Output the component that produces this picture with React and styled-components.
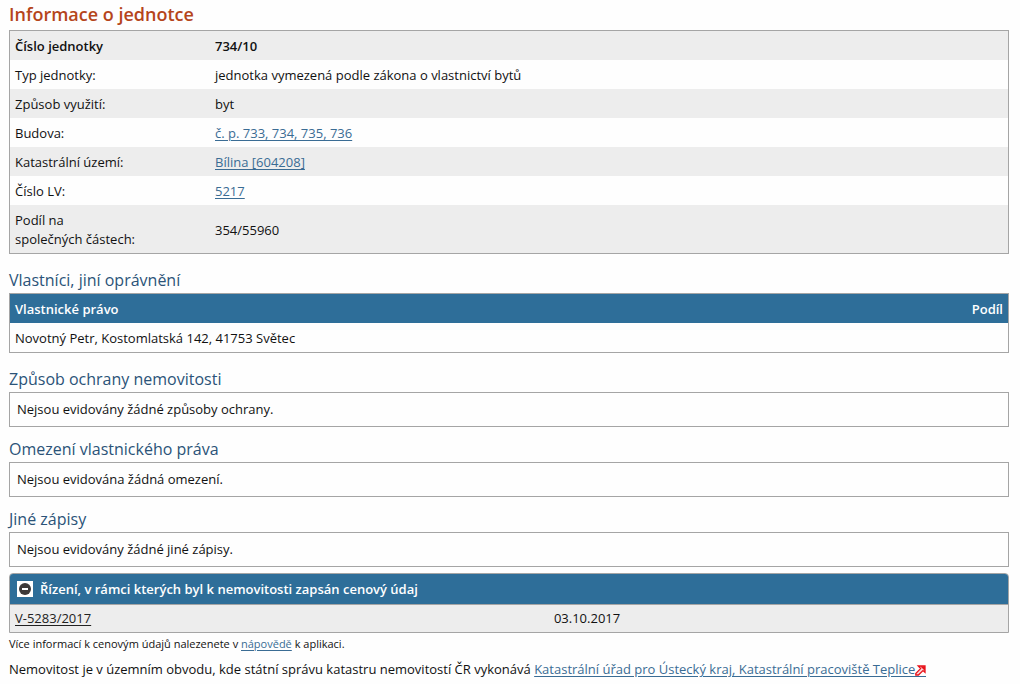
import React, { useState } from 'react';
import styled, { createGlobalStyle } from 'styled-components';

const GlobalStyle = createGlobalStyle`
  body {
    margin: 0;
    background-color: #fefefe;
    color: #111;
    font-family: "Open Sans", "Noto Sans", sans-serif;
    font-size: 13px;
    line-height: 19px;
  }
`;

const Page = styled.main`
  padding: 2px 11px 5px 9px;
`;

const Title = styled.h1`
  margin: 0;
  padding-bottom: 4px;
  color: #b5451b;
  font-size: 18px;
  font-weight: 600;
  line-height: 24px;
`;

const Heading = styled.h2`
  margin: ${props => (props.$afterTable ? '13px' : '9px')} 0 0;
  color: #2b5378;
  font-size: 16px;
  font-weight: 500;
  line-height: 26px;
`;

const Table = styled.table`
  box-sizing: border-box;
  width: 100%;
  border: 1px solid #a5a5a5;
  border-spacing: 0;
`;

const Row = styled.tr`
  background-color: ${props => (props.$shaded ? '#ededed' : '#fefefe')};
  font-weight: ${props => (props.$strong ? 600 : 400)};
`;

const Label = styled.th`
  box-sizing: border-box;
  width: 200px;
  padding: 6px 5px 4px;
  font-weight: inherit;
  text-align: left;
`;

const Cell = styled.td`
  padding: 6px 5px 4px;
`;

const HeadCell = styled.th`
  padding: 6px 5px 4px;
  background-color: #2e6e99;
  color: #fff;
  font-weight: 600;
  text-align: ${props => (props.$right ? 'right' : 'left')};
`;

const Box = styled.div`
  padding: 7px;
  border: 1px solid #a5a5a5;
`;

const Link = styled.a`
  color: ${props => (props.$dark ? '#222' : '#3a6c94')};
  text-decoration: underline;
  text-underline-offset: 2px;
`;

const Panel = styled.section`
  margin-top: 6px;
  border: 1px solid #a5a5a5;
  border-radius: 4px 4px 0 0;
  background-color: #ededed;
`;

const PanelToggle = styled.button`
  display: flex;
  align-items: center;
  gap: 7px;
  width: 100%;
  height: 30px;
  padding: 0 7px;
  border: none;
  border-radius: 3px 3px 0 0;
  background-color: #2e6e99;
  color: #fff;
  font: inherit;
  font-weight: 600;
  text-align: left;
  cursor: pointer;
`;

const PanelTable = styled.table`
  width: 100%;
  border-top: 1px solid #a5a5a5;
  border-spacing: 0;
  table-layout: fixed;
`;

const PanelCell = styled.td`
  box-sizing: border-box;
  width: ${props => props.$width || 'auto'};
  padding: 4px 5px;
`;

const Note = styled.p`
  margin: 3px 0 0;
  font-size: 11px;
  line-height: 16px;
`;

const Office = styled.p`
  margin: 8px 0 0;
`;

const ToggleIcon = ({ open }) => (
  <svg width="16" height="16" viewBox="0 0 16 16" aria-hidden="true">
    <rect width="16" height="16" fill="#fff" />
    <circle cx="8" cy="8" r="6" fill="#3d3938" />
    <rect x="5" y="7" width="6" height="2" fill="#fff" />
    {!open && <rect x="7" y="5" width="2" height="6" fill="#fff" />}
  </svg>
);

const ArrowIcon = styled.svg`
  border-bottom: 1px solid #3a6c94;
  vertical-align: -3px;
`;

const ExternalIcon = () => (
  <ArrowIcon width="11" height="11" viewBox="0 0 11 11" aria-hidden="true">
    <path
      d="M3.2 1H10V7.4L8 5.6L3.4 10H0.8L0.8 8.6L5.6 3.6Z"
      fill="#fbd5d6"
      stroke="#e8131b"
      strokeWidth="1.3"
    />
    <path d="M5.2 1.2H10V6Z" fill="#e8131b" />
  </ArrowIcon>
);

const details = [
  { label: 'Číslo jednotky', value: '734/10', strong: true },
  { label: 'Typ jednotky:', value: 'jednotka vymezená podle zákona o vlastnictví bytů' },
  { label: 'Způsob využití:', value: 'byt' },
  { label: 'Budova:', value: 'č. p. 733, 734, 735, 736', link: true },
  { label: 'Katastrální území:', value: 'Bílina [604208]', link: true },
  { label: 'Číslo LV:', value: '5217', link: true },
  { label: <>Podíl na<br />společných částech:</>, value: '354/55960' },
];

const records = [
  { title: 'Způsob ochrany nemovitosti', text: 'Nejsou evidovány žádné způsoby ochrany.', afterTable: true },
  { title: 'Omezení vlastnického práva', text: 'Nejsou evidována žádná omezení.' },
  { title: 'Jiné zápisy', text: 'Nejsou evidovány žádné jiné zápisy.' },
];

const App = () => {
  const [open, setOpen] = useState(true);

  return (
    <Page>
      <GlobalStyle />
      <Title>Informace o jednotce</Title>
      <Table>
        <tbody>
          {details.map((item, i) => (
            <Row key={item.value} $shaded={i % 2 === 0} $strong={item.strong}>
              <Label scope="row">{item.label}</Label>
              <Cell>{item.link ? <Link href="#">{item.value}</Link> : item.value}</Cell>
            </Row>
          ))}
        </tbody>
      </Table>

      <Heading $afterTable>Vlastníci, jiní oprávnění</Heading>
      <Table>
        <thead>
          <tr>
            <HeadCell scope="col">Vlastnické právo</HeadCell>
            <HeadCell scope="col" $right>Podíl</HeadCell>
          </tr>
        </thead>
        <tbody>
          <Row>
            <Cell>Novotný Petr, Kostomlatská 142, 41753 Světec</Cell>
            <Cell />
          </Row>
        </tbody>
      </Table>

      {records.map(record => (
        <React.Fragment key={record.title}>
          <Heading $afterTable={record.afterTable}>{record.title}</Heading>
          <Box>{record.text}</Box>
        </React.Fragment>
      ))}

      <Panel>
        <PanelToggle type="button" aria-expanded={open} onClick={() => setOpen(!open)}>
          <ToggleIcon open={open} />
          Řízení, v rámci kterých byl k nemovitosti zapsán cenový údaj
        </PanelToggle>
        {open && (
          <PanelTable>
            <tbody>
              <tr>
                <PanelCell $width="54%"><Link href="#" $dark>V-5283/2017</Link></PanelCell>
                <PanelCell>03.10.2017</PanelCell>
              </tr>
            </tbody>
          </PanelTable>
        )}
      </Panel>
      <Note>
        Více informací k cenovým údajů nalezenete v <Link href="#">nápovědě</Link> k aplikaci.
      </Note>
      <Office>
        Nemovitost je v územním obvodu, kde státní správu katastru nemovitostí ČR vykonává{' '}
        <Link href="#">
          Katastrální úřad pro Ústecký kraj, Katastrální pracoviště Teplice<ExternalIcon />
        </Link>
      </Office>
    </Page>
  );
};

export default App;
